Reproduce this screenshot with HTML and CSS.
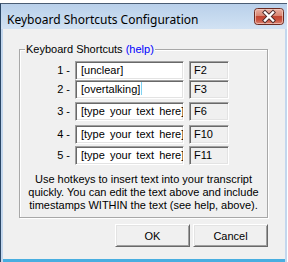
FILE: index.html
```html
<!DOCTYPE html>
<html>
<head>
<meta charset="utf-8">
<title>Keyboard Shortcuts Configuration</title>
<link rel="stylesheet" href="styles.css">
</head>
<body>
<div class="screen">
  <div class="window">
    <div class="titlebar">
      <span class="title">Keyboard Shortcuts Configuration</span>
      <span class="close">
        <svg width="30" height="17" viewBox="0 0 30 17">
          <defs>
            <linearGradient id="cg" x1="0" y1="0" x2="0" y2="1">
              <stop offset="0" stop-color="#eab3a6"/>
              <stop offset="0.45" stop-color="#d98672"/>
              <stop offset="0.5" stop-color="#c24632"/>
              <stop offset="0.7" stop-color="#c9503c"/>
              <stop offset="1" stop-color="#dc8a78"/>
            </linearGradient>
          </defs>
          <rect x="0.5" y="0.5" width="29" height="16" rx="3" fill="url(#cg)" stroke="#6b2a20"/>
          <rect x="1.5" y="1.5" width="27" height="14" rx="2" fill="none" stroke="#f3cfc6" stroke-opacity="0.7"/>
          <path d="M11 4.5 L19 12.5 M19 4.5 L11 12.5" stroke="#4a2a2a" stroke-width="4.2" stroke-linecap="square"/>
          <path d="M11 4.5 L19 12.5 M19 4.5 L11 12.5" stroke="#ffffff" stroke-width="2.4" stroke-linecap="square"/>
        </svg>
      </span>
    </div>
    <div class="client">
      <fieldset class="group">
        <legend class="group-label">Keyboard Shortcuts <span class="help">(help)</span></legend>
        <div class="rows">
          <div class="row">
            <span class="num">1 -</span>
            <span class="edit">[unclear]</span>
            <span class="key">F2</span>
          </div>
          <div class="row">
            <span class="num">2 -</span>
            <span class="edit">[overtalking]<span class="caret"></span></span>
            <span class="key">F3</span>
          </div>
          <div class="row gap3">
            <span class="num">3 -</span>
            <span class="edit">[type your text here]</span>
            <span class="key">F6</span>
          </div>
          <div class="row gap4">
            <span class="num">4 -</span>
            <span class="edit">[type your text here]</span>
            <span class="key">F10</span>
          </div>
          <div class="row gap2">
            <span class="num">5 -</span>
            <span class="edit">[type your text here]</span>
            <span class="key">F11</span>
          </div>
        </div>
        <p class="note">Use hotkeys to insert text into your transcript<br>quickly. You can edit the text above and include<br>timestamps WITHIN the text (see help, above).</p>
      </fieldset>
      <div class="buttons">
        <span class="btn">OK</span>
        <span class="btn">Cancel</span>
      </div>
    </div>
  </div>
</div>
</body>
</html>
```

FILE: styles.css
```css
html, body {
  margin: 0;
  padding: 0;
  background: #ffffff;
}

.screen {
  width: 288px;
  height: 262px;
  overflow: hidden;
  background: #ffffff;
  font-family: "Liberation Sans", Arial, sans-serif;
  font-size: 11px;
  color: #000;
}

.window {
  margin-top: 3px;
  width: 287px;
  height: 262px;
  box-sizing: border-box;
  border-top: 1px solid #4a5d74;
  border-left: 1px solid #2b4766;
  background: #c3d7ee;
  padding: 0 2px 0 2px;
  display: flex;
  flex-direction: column;
}

.titlebar {
  height: 25px;
  flex: none;
  display: flex;
  align-items: flex-start;
  justify-content: space-between;
  background: linear-gradient(#b9d0ea, #c6daef 55%, #d2e2f3);
  margin: 0 -2px 0 -2px;
  padding: 0 2px 0 2px;
}

.title {
  font-family: "Noto Sans", sans-serif;
  font-size: 12px;
  line-height: 16px;
  margin: 8px 0 0 4px;
  color: #000;
}

.close {
  display: block;
  width: 30px;
  height: 17px;
  margin: 4px 1px 0 0;
}

.close svg {
  display: block;
}

.client {
  flex: none;
  height: 230px;
  background: #f0f0f0;
  padding: 0 17px 0 16px;
  display: flex;
  flex-direction: column;
  border-bottom: 3px solid #48aee0;
}

.group {
  margin: 14px 0 0 0;
  padding: 0 0 4px 0;
  min-width: 0;
  border: 1px solid #a8a8a8;
  box-shadow: inset 1px 1px 0 #fff, 1px 1px 0 #fff;
  height: 175px;
  box-sizing: border-box;
}

.group-label {
  padding: 0 1px;
  margin-left: 5px;
  line-height: 13px;
  background: #f0f0f0;
}

.help {
  color: #0000ff;
}

.rows {
  margin-top: 5px;
  display: flex;
  flex-direction: column;
}

.row {
  display: grid;
  grid-template-columns: 50px 109px 40px;
  column-gap: 5px;
  height: 19px;
}

.gap3 { margin-top: 3px; }
.gap4 { margin-top: 4px; }
.gap2 { margin-top: 2px; }

.num {
  text-align: right;
  line-height: 19px;
  white-space: nowrap;
}

.edit,
.key {
  box-sizing: border-box;
  height: 19px;
  border-top: 1px solid #a0a0a0;
  border-left: 1px solid #a0a0a0;
  border-right: 1px solid #ffffff;
  border-bottom: 1px solid #ffffff;
  box-shadow: inset 1px 1px 0 #696969, inset -1px -1px 0 #e3e3e3;
  padding-left: 5px;
  line-height: 17px;
  white-space: nowrap;
  overflow: hidden;
}

.edit {
  background: #ffffff;
  padding-left: 5px;
  word-spacing: 2px;
}

.key {
  background: #f0f0f0;
  padding-left: 4px;
}

.caret {
  display: inline-block;
  width: 1px;
  height: 13px;
  margin-left: 1px;
  vertical-align: -2px;
  background: #7fd2f2;
}

.note {
  margin: 8px 0 0 0;
  text-align: center;
  line-height: 13px;
}

.buttons {
  margin-top: 6px;
  display: flex;
  justify-content: flex-end;
  gap: 3px;
}

.btn {
  box-sizing: border-box;
  width: 75px;
  height: 23px;
  display: flex;
  align-items: center;
  justify-content: center;
  background: #f0f0f0;
  border-top: 1px solid #ffffff;
  border-left: 1px solid #ffffff;
  border-right: 1px solid #696969;
  border-bottom: 1px solid #696969;
  box-shadow: inset 1px 1px 0 #e3e3e3, inset -1px -1px 0 #a0a0a0;
}
```
